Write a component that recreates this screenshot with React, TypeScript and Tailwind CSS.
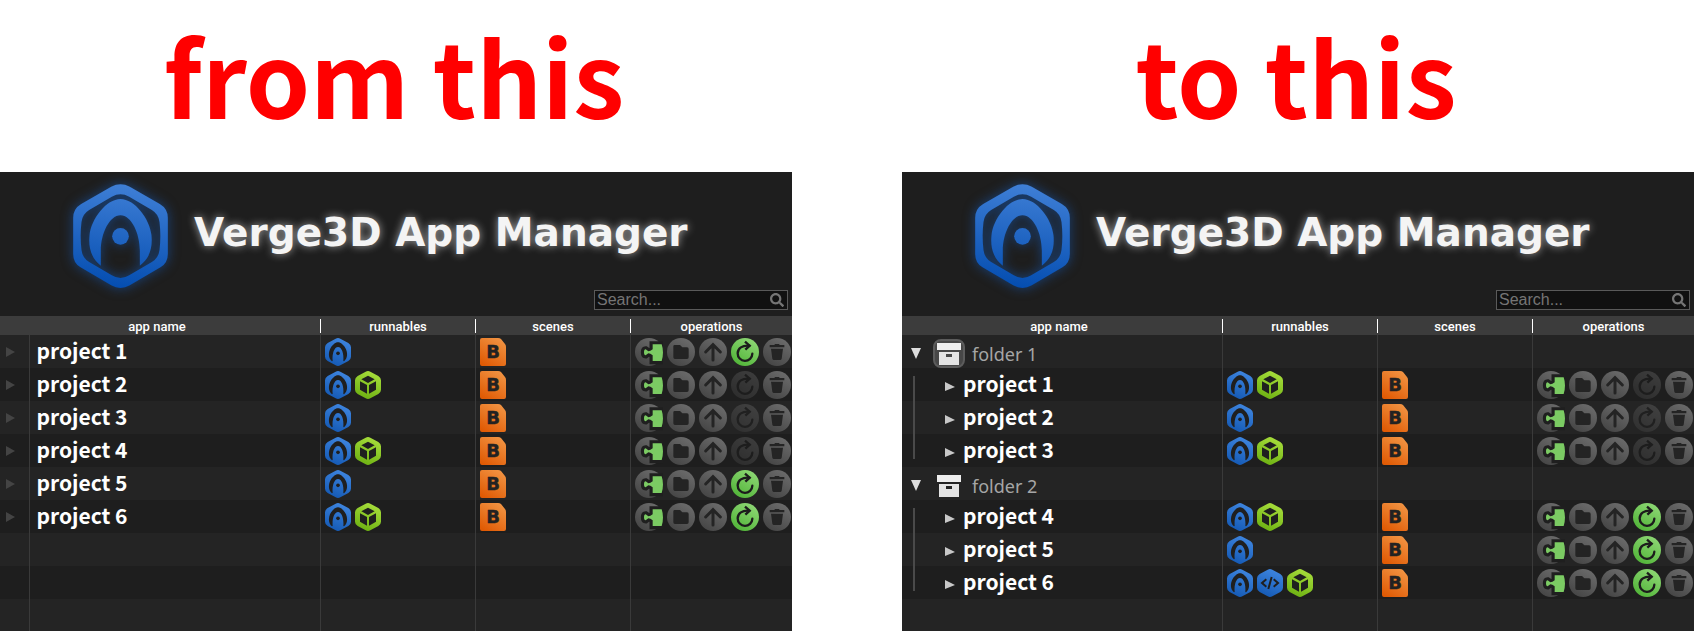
import clsx from "clsx";
import { FaSearch } from "react-icons/fa";

type Runnable = "app" | "code" | "cube";

type Row =
  | { kind: "project"; name: string; runnables: Runnable[]; canUpdate: boolean; place?: "first" | "last" }
  | { kind: "folder"; name: string; selected?: boolean }
  | { kind: "empty"; short?: boolean };

const flatRows: Row[] = [
  { kind: "project", name: "project 1", runnables: ["app"], canUpdate: true },
  { kind: "project", name: "project 2", runnables: ["app", "cube"], canUpdate: false },
  { kind: "project", name: "project 3", runnables: ["app"], canUpdate: false },
  { kind: "project", name: "project 4", runnables: ["app", "cube"], canUpdate: false },
  { kind: "project", name: "project 5", runnables: ["app"], canUpdate: true },
  { kind: "project", name: "project 6", runnables: ["app", "cube"], canUpdate: true },
  { kind: "empty" },
  { kind: "empty" },
  { kind: "empty", short: true },
];

const treeRows: Row[] = [
  { kind: "folder", name: "folder 1", selected: true },
  { kind: "project", name: "project 1", runnables: ["app", "cube"], canUpdate: false, place: "first" },
  { kind: "project", name: "project 2", runnables: ["app"], canUpdate: false },
  { kind: "project", name: "project 3", runnables: ["app", "cube"], canUpdate: false, place: "last" },
  { kind: "folder", name: "folder 2" },
  { kind: "project", name: "project 4", runnables: ["app", "cube"], canUpdate: true, place: "first" },
  { kind: "project", name: "project 5", runnables: ["app"], canUpdate: true },
  { kind: "project", name: "project 6", runnables: ["app", "code", "cube"], canUpdate: true, place: "last" },
  { kind: "empty", short: true },
];

/* Gradients shared by all icons */
function Gradients() {
  return (
    <svg className="absolute h-0 w-0" aria-hidden="true">
      <defs>
        <linearGradient id="logo" gradientUnits="userSpaceOnUse" x1="200" y1="26" x2="164" y2="338">
          <stop offset="0" stopColor="#3f7fd6" />
          <stop offset="1" stopColor="#044db0" />
        </linearGradient>
        <linearGradient id="blue" x1="0.7" y1="0" x2="0.3" y2="1">
          <stop offset="0" stopColor="#3f86e0" />
          <stop offset="1" stopColor="#1459b4" />
        </linearGradient>
        <linearGradient id="lime" x1="0.7" y1="0" x2="0.3" y2="1">
          <stop offset="0" stopColor="#a8de3c" />
          <stop offset="1" stopColor="#6cb012" />
        </linearGradient>
        <linearGradient id="orange" x1="0.8" y1="0" x2="0.2" y2="1">
          <stop offset="0" stopColor="#f19443" />
          <stop offset="1" stopColor="#e05a04" />
        </linearGradient>
        <linearGradient id="gray" x1="0.8" y1="0" x2="0.2" y2="1">
          <stop offset="0" stopColor="#6c6c6c" />
          <stop offset="1" stopColor="#444444" />
        </linearGradient>
        <linearGradient id="green" x1="0.8" y1="0" x2="0.2" y2="1">
          <stop offset="0" stopColor="#8fd876" />
          <stop offset="1" stopColor="#4fb336" />
        </linearGradient>
      </defs>
    </svg>
  );
}

function Logo() {
  return (
    <svg
      viewBox="40 26 284 312"
      className="h-[104px] w-[95px] shrink-0 overflow-visible drop-shadow-[0_0_6px_rgba(20,100,210,0.55)]"
      aria-hidden="true"
    >
      <path
        fill="url(#logo)"
        fillRule="evenodd"
        d="M154 34Q182 20 210 34L300 86Q324 100 324 128V236Q324 263 302 276L210 330Q182 346 154 330L62 276Q40 263 40 236V128Q40 100 64 86ZM156 64Q182 50 208 64L276 104Q296 116 299 140Q304 182 299 224Q296 248 276 260L208 300Q182 316 156 300L88 260Q68 248 65 224Q60 182 65 140Q68 116 88 104Z"
      />
      <path
        fill="url(#logo)"
        d="M123 271C96 250 85 220 89 180C94 130 140 71 182 71C224 71 270 130 275 180C279 220 268 250 240 271V226C240 175 215 120 182 120C149 120 123 175 123 226Z"
      />
      <circle cx="182" cy="183" r="25" fill="url(#logo)" />
    </svg>
  );
}

const HEX = "M32 2Q39 -2 46 2L70 15Q78 20 78 28V56Q78 64 70 69L46 82Q39 86 32 82L8 69Q0 64 0 56V28Q0 20 8 15Z";

function RunnableIcon({ type }: { type: Runnable }) {
  return (
    <svg viewBox="0 0 78 84" className="h-7 w-[26px]">
      <path d={HEX} fill={type === "cube" ? "url(#lime)" : "url(#blue)"} />
      {type === "app" && (
        <>
          <path
            fill="#1f1f1f"
            d="M21 70C10 62 10 45 15 34C21 21 31 13 39 13C47 13 57 21 63 34C68 45 68 62 57 70L55 69C57 46 50 27 39 27C28 27 21 46 23 69Z"
          />
          <circle cx="39" cy="46" r="5.5" fill="#1f1f1f" />
        </>
      )}
      {type === "cube" && (
        <g fill="#1f1f1f">
          <path d="M39 14L59 25L39 36L19 25Z" />
          <path d="M15 31L36 42V68L15 56Z" />
          <path d="M63 31L42 42V68L63 56Z" />
        </g>
      )}
      {type === "code" && (
        <g fill="none" stroke="#1f1f1f" strokeWidth="6">
          <path d="M28 31L15 42L28 53M50 31L63 42L50 53M44 24L34 60" />
        </g>
      )}
    </svg>
  );
}

function SceneIcon() {
  return (
    <svg viewBox="0 0 26 28" className="h-7 w-[26px]">
      <path d="M2 0H18Q20 0 21 1L25 6Q26 7 26 9V26Q26 28 24 28H2Q0 28 0 26V2Q0 0 2 0Z" fill="url(#orange)" />
      <text
        x="13"
        y="20"
        textAnchor="middle"
        fill="#222222"
        stroke="#222222"
        strokeWidth="0.4"
        className="font-['DejaVu_Sans',sans-serif] text-[18px] font-bold"
      >
        B
      </text>
    </svg>
  );
}

function PuzzleIcon() {
  const piece = "M53 19H80Q88 43 80 69H53V52Q46 46 40 46L32 52Q27 52 27 43Q27 34 32 34L40 40Q46 40 53 34Z";
  return (
    <svg viewBox="0 0 84 84" className="h-7 w-7">
      <circle cx="42" cy="42" r="42" fill="url(#gray)" />
      <path d={piece} fill="#1f1f1f" stroke="#1f1f1f" strokeWidth="19" />
      <path d={piece} fill="#7bcb63" />
    </svg>
  );
}

function FolderIcon() {
  return (
    <svg viewBox="0 0 84 84" className="h-7 w-7">
      <circle cx="42" cy="42" r="42" fill="url(#gray)" />
      <path d="M23 21H39L46 28H60Q65 28 65 33V58Q65 63 60 63H24Q19 63 19 58V25Q19 21 23 21Z" fill="#242424" />
    </svg>
  );
}

function UploadIcon() {
  return (
    <svg viewBox="0 0 84 84" className="h-7 w-7">
      <circle cx="42" cy="42" r="42" fill="url(#gray)" />
      <path d="M42 66V22M20 42L42 20L64 42" fill="none" stroke="#242424" strokeWidth="9" strokeLinecap="round" />
    </svg>
  );
}

function UpdateIcon({ active }: { active: boolean }) {
  return (
    <svg viewBox="0 0 84 84" className={clsx("h-7 w-7", !active && "opacity-40")}>
      <circle cx="42" cy="42" r="42" fill={active ? "url(#green)" : "url(#gray)"} />
      <path
        d="M55 23C34 21 20 31 20 46A22 22 0 0 0 64 47"
        fill="none"
        stroke="#1c1c1c"
        strokeWidth="7"
        strokeLinecap="round"
      />
      <path d="M42 11L56 23L43 35" fill="none" stroke="#1c1c1c" strokeWidth="7" />
    </svg>
  );
}

function TrashIcon() {
  return (
    <svg viewBox="0 0 84 84" className="h-7 w-7">
      <circle cx="42" cy="42" r="42" fill="url(#gray)" />
      <path d="M20 21H34L36 18H48L50 21H64V28H20ZM24 32H60L56 62Q55 66 51 66H33Q29 66 28 62Z" fill="#242424" />
    </svg>
  );
}

function ArchiveIcon() {
  return (
    <svg viewBox="0 0 24 22" className="h-[22px] w-6">
      <path d="M0 0H24V7H0Z" fill="#eeeeee" />
      <path fillRule="evenodd" d="M2 9H22V22H2ZM9 11V14H15V11Z" fill="#e4e4e4" />
    </svg>
  );
}

function Operations({ name, canUpdate }: { name: string; canUpdate: boolean }) {
  return (
    <div className="flex gap-1">
      <button type="button" aria-label={`Edit logic of ${name}`}>
        <PuzzleIcon />
      </button>
      <button type="button" aria-label={`Open files of ${name}`}>
        <FolderIcon />
      </button>
      <button type="button" aria-label={`Publish ${name}`}>
        <UploadIcon />
      </button>
      <button type="button" aria-label={`Update ${name}`} disabled={!canUpdate}>
        <UpdateIcon active={canUpdate} />
      </button>
      <button type="button" aria-label={`Delete ${name}`}>
        <TrashIcon />
      </button>
    </div>
  );
}

const PROJECT_TEXT = "pb-1 font-['Noto_Sans_CJK_SC','Noto_Sans',sans-serif] text-[21px] font-bold leading-7 text-white";

function NameCells({ row, tree }: { row: Row; tree: boolean }) {
  if (!tree) {
    return (
      <>
        <td className="pl-1.5">
          {row.kind === "project" && (
            <button type="button" aria-label={`Expand ${row.name}`} className="block">
              <svg viewBox="0 0 9 10" className="h-2.5 w-[9px]">
                <path d="M0 0L9 5L0 10Z" fill="#444444" />
              </svg>
            </button>
          )}
        </td>
        <td className="border-l border-[#3a3a3a] pl-[7px]">
          {row.kind === "project" && <div className={PROJECT_TEXT}>{row.name}</div>}
        </td>
      </>
    );
  }

  return (
    <td colSpan={2}>
      {row.kind === "folder" && (
        <div className="flex h-[33px] items-center pl-[9px] pt-1">
          <button type="button" aria-label={`Collapse ${row.name}`}>
            <svg viewBox="0 0 10 11" className="h-[11px] w-2.5">
              <path d="M0 0H10L5 11Z" fill="#dddddd" />
            </svg>
          </button>
          <span
            className={clsx(
              "ml-3 flex h-[29px] w-8 items-center justify-center rounded-lg",
              row.selected && "border-2 border-[#5c5c5c] bg-[#474747]",
            )}
          >
            <ArchiveIcon />
          </span>
          <span className="ml-[7px] font-['Noto_Sans','Open_Sans',sans-serif] text-lg leading-6 text-[#a6a6a6]">
            {row.name}
          </span>
        </div>
      )}
      {row.kind === "project" && (
        <div className="flex h-[33px] items-center pl-[11px]">
          <span
            className={clsx(
              "w-0.5 self-stretch bg-[#4a4a4a]",
              row.place === "first" && "mt-2",
              row.place === "last" && "mb-2",
            )}
          />
          <button type="button" aria-label={`Expand ${row.name}`} className="ml-[30px] pt-1">
            <svg viewBox="0 0 10 9" className="h-[9px] w-2.5">
              <path d="M0 0L10 5L0 9Z" fill="#c8c8c8" />
            </svg>
          </button>
          <span className={clsx("ml-2", PROJECT_TEXT)}>{row.name}</span>
        </div>
      )}
    </td>
  );
}

function HeadCell({ label }: { label: string }) {
  return (
    <th scope="col" className="p-0 font-medium">
      <div className="flex h-3.5 items-center justify-center border-l border-white pt-0.5 leading-3.5">{label}</div>
    </th>
  );
}

function AppManager({ rows, tree = false }: { rows: Row[]; tree?: boolean }) {
  return (
    <section className="bg-[#1e1e1e]">
      {/* Header */}
      <div className="flex items-center gap-[26px] pl-[73px] pt-3">
        <Logo />
        <h2 className="whitespace-nowrap pb-1.5 font-['DejaVu_Sans',sans-serif] text-[39px] font-bold leading-[48px] text-[#f4f4f4] [text-shadow:0_0_9px_rgba(255,255,255,0.6)]">
          Verge3D App Manager
        </h2>
      </div>
      <div className="mb-1.5 mr-1 mt-0.5 flex justify-end">
        <div className="flex h-5 w-[194px] items-center border border-[#5a5a5a] bg-[#111111] pr-[3px]">
          <input
            type="text"
            aria-label="Search apps"
            placeholder="Search..."
            className="min-w-0 flex-1 bg-transparent pl-0.5 font-['Liberation_Sans',Arial,sans-serif] text-base leading-[18px] text-white outline-none placeholder:text-[#757575]"
          />
          <FaSearch className="h-3.5 w-3.5 text-[#757575]" />
        </div>
      </div>

      {/* Apps */}
      <table className="w-full table-fixed border-collapse">
        <colgroup>
          <col className="w-[29px]" />
          <col />
          <col className="w-[155px]" />
          <col className="w-[155px]" />
          <col className="w-[162px]" />
        </colgroup>
        <thead>
          <tr className="h-[19px] bg-[#3c3c3c] font-['Roboto','Liberation_Sans',sans-serif] text-[13px] text-white">
            <th scope="col" colSpan={2} className="p-0 pr-1.5 pt-0.5 font-medium leading-3.5">
              app name
            </th>
            <HeadCell label="runnables" />
            <HeadCell label="scenes" />
            <HeadCell label="operations" />
          </tr>
        </thead>
        <tbody>
          {rows.map((row, i) => (
            <tr
              key={i}
              className={clsx(
                row.kind === "empty" && row.short ? "h-8" : "h-[33px]",
                i % 2 ? "bg-[#1e1e1e]" : "bg-[#242424]",
              )}
            >
              <NameCells row={row} tree={tree} />
              <td className="border-l border-[#3a3a3a] pl-1">
                {row.kind === "project" && (
                  <div className="flex gap-1">
                    {row.runnables.map((type) => (
                      <button key={type} type="button" aria-label={`Run ${row.name} (${type})`}>
                        <RunnableIcon type={type} />
                      </button>
                    ))}
                  </div>
                )}
              </td>
              <td className="border-l border-[#3a3a3a] pl-1">
                {row.kind === "project" && (
                  <button type="button" aria-label={`Open scene of ${row.name}`} className="block">
                    <SceneIcon />
                  </button>
                )}
              </td>
              <td className="border-l border-[#3a3a3a] pl-1">
                {row.kind === "project" && <Operations name={row.name} canUpdate={row.canUpdate} />}
              </td>
            </tr>
          ))}
        </tbody>
      </table>
    </section>
  );
}

function Column({ title, rows, tree }: { title: string; rows: Row[]; tree?: boolean }) {
  return (
    <div className="min-w-0 flex-1">
      <h1 className="h-[172px] pr-1 text-center font-['Noto_Sans_CJK_SC','Noto_Sans',sans-serif] text-[103px] font-bold leading-[150px] text-[#ff0000]">
        {title}
      </h1>
      <AppManager rows={rows} tree={tree} />
    </div>
  );
}

export default function App() {
  return (
    <main className="flex min-h-screen gap-[110px] bg-white">
      <Gradients />
      <Column title="from this" rows={flatRows} />
      <Column title="to this" rows={treeRows} tree />
    </main>
  );
}
